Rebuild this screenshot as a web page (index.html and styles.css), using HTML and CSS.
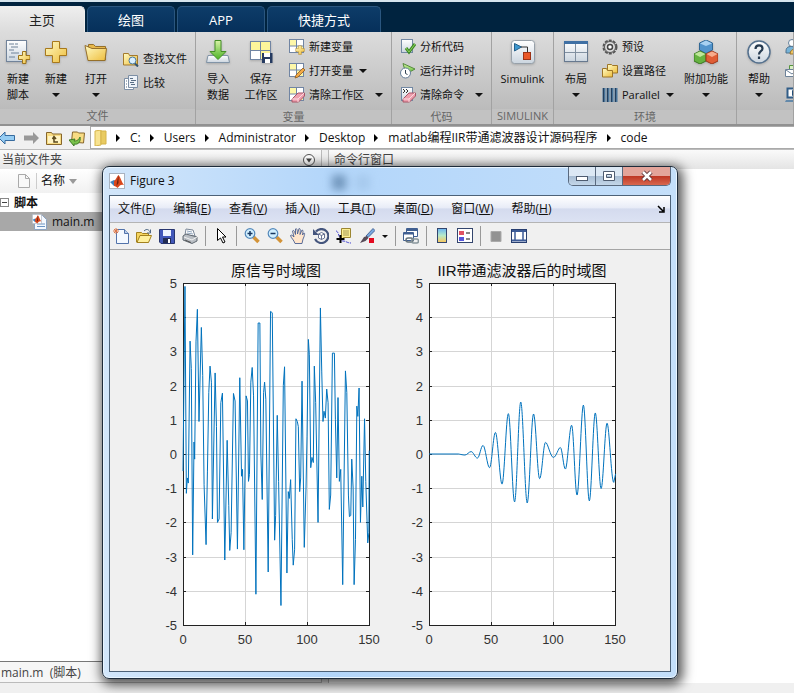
FILE: index.html
```html
<!DOCTYPE html>
<html lang="zh-CN">
  <head>
    <meta charset="UTF-8" />
    <title>MATLAB</title>
    <link rel="stylesheet" href="styles.css">
  </head>
  <body>
    <!-- shared icons -->
    <svg class="defs" width="0" height="0" aria-hidden="true">
      <defs>
        <linearGradient id="gold" x1="0" y1="0" x2="1" y2="1"><stop offset="0" stop-color="#fffbc4" /><stop offset="1" stop-color="#eebd3c" /></linearGradient>
        <linearGradient id="green" x1="0" y1="0" x2="0" y2="1"><stop offset="0" stop-color="#d9f3a8" /><stop offset="1" stop-color="#4bb324" /></linearGradient>
        <linearGradient id="silver" x1="0" y1="0" x2="0" y2="1"><stop offset="0" stop-color="#fff" /><stop offset="1" stop-color="#cbd5df" /></linearGradient>
        <linearGradient id="rainbow" x1="0" y1="0" x2="0" y2="1"><stop offset="0" stop-color="#6ab4f4" /><stop offset=".5" stop-color="#b7eac9" /><stop offset="1" stop-color="#fbc65a" /></linearGradient>
      </defs>
      <symbol id="plus" viewBox="0 0 24 24"><path d="M8.500 1.500h7v7h7v7h-7v7h-7v-7h-7v-7h7z" fill="url(#gold)" stroke="#a8791c" /></symbol>
      <symbol id="folder" viewBox="0 0 24 24"><path d="M4.500 20V4.500h5l2 2h10V20z" fill="#e7b84b" stroke="#96702a" /><path d="M1 5.500l7 3h14.500l-1.500 12H4z" fill="url(#gold)" stroke="#96702a" /></symbol>
      <symbol id="grid" viewBox="0 0 16 16"><rect x=".5" y=".5" width="14" height="13" fill="#fff" stroke="#7185a3" /><path d="M1 1h6v6H1zM8 7h6v6H8z" fill="#fdf7a8" /><path d="M7.500 1v12M1 7h13" stroke="#7185a3" /></symbol>
      <symbol id="page" viewBox="0 0 16 16"><rect x="1.500" y=".5" width="11" height="13" fill="url(#silver)" stroke="#7288a3" /></symbol>
      <symbol id="eraser" viewBox="0 0 16 16"><path d="M3 12l6-6h6.500v3l-6 6H3z" fill="#ee9fae" stroke="#a75466" /><path d="M3 12h6l6-6M9 12v3" fill="none" stroke="#fbd9df" /></symbol>
      <symbol id="matlab" viewBox="0 0 16 16"><rect x=".5" y=".5" width="15" height="15" fill="#fff" stroke="#a9b3c0" /><path d="M1 9l4-2 3 2-3 4z" fill="#3f82bd" /><path d="M5 8c2-1 3-5 4.500-6 2 2 3 7 5.500 10-3-1-4 0-6.500 3-1-1-2-2-3.500-2z" fill="#d9471c" /><path d="M8 9l1.500-7v8l-2 3z" fill="#71200e" /></symbol>
      <symbol id="lens" viewBox="0 0 16 16"><path d="M9.500 9l5 5" stroke="#d39337" stroke-width="3.500" /><circle cx="6" cy="5.500" r="4.800" fill="#d1efff" stroke="#5488ba" stroke-width="1.200" /><path d="M3.500 5.500h5" stroke="#17355f" stroke-width="1.500" /></symbol>
    </svg>

    <div class="app">
      <!-- tabs -->
      <nav class="tabs">
        <button class="tab on">主页</button>
        <button class="tab">绘图</button>
        <button class="tab">APP</button>
        <button class="tab wide">快捷方式</button>
      </nav>

      <!-- ribbon -->
      <div class="ribbon">
        <section class="group">
          <div class="tools file">
            <button class="big">
              <svg viewBox="0 0 24 24"><rect x=".5" y=".5" width="20" height="21" fill="url(#silver)" stroke="#71839a" /><path d="M3 4h5M9 4h3M5 7h7M3 10h5M5 13h8M3 17h6" stroke="#6f8299" /><path d="M16.500 11.500h3.500v4h4v4h-4v4h-3.500v-4h-4v-4h4z" fill="url(#gold)" stroke="#9d741d" /></svg>
              <span>新建<br>脚本</span>
            </button>
            <button class="big"><svg><use href="#plus" /></svg><span>新建</span><i class="arrow"></i></button>
            <button class="big"><svg><use href="#folder" /></svg><span>打开</span><i class="arrow"></i></button>
            <div class="rows">
              <button class="row"><svg viewBox="0 0 16 16"><path d="M.5 14V2.500h5l1 2h8V14z" fill="url(#gold)" stroke="#a47a2c" /><path d="M11.500 12l3.500 3.500" stroke="#34556f" stroke-width="2" /><circle cx="9.500" cy="9.500" r="3.500" fill="#d9efff" stroke="#48779c" /></svg>查找文件</button>
              <button class="row"><svg viewBox="0 0 16 16"><path d="M1.500 3.500h9v11h-9z" fill="#fff" stroke="#7d8fa5" /><path d="M5.500.5h9v12h-9z" fill="#edf2f8" stroke="#7d8fa5" /><path d="M7 3.500h3M8 5.500h5M7 7.500h4M8 9.500h4M3 6h1M3 9h1M3 12h1" stroke="#5a6f86" /></svg>比较</button>
            </div>
          </div>
          <h2>文件</h2>
        </section>

        <section class="group">
          <div class="tools vars">
            <button class="big">
              <svg viewBox="0 0 24 24"><path d="M2 15.500h20l1.500 7H.5z" fill="url(#silver)" stroke="#8194a7" /><path d="M9 .5h6v11h5l-8 8-8-8h5z" fill="url(#green)" stroke="#438f25" /></svg>
              <span>导入<br>数据</span>
            </button>
            <button class="big">
              <svg viewBox="0 0 24 24"><rect x="1.500" y="1.500" width="20" height="18" fill="#fff" stroke="#7185a3" /><path d="M2 2h9v8H2zM12 2h9v8h-9zM12 11h9v8h-9z" fill="#fdf59a" /><path d="M11.500 2v17M2 10.500h19" stroke="#7185a3" /><path d="M13 13h10.500v10H13z" fill="#263b61" /><path d="M15 13h6v4h-6zM16 19h5v4h-5z" fill="#fff" /></svg>
              <span>保存<br>工作区</span>
            </button>
            <div class="rows">
              <button class="row"><svg viewBox="0 0 16 16"><use href="#grid" /><use href="#plus" x="6" y="6" width="10" height="10" /></svg>新建变量</button>
              <button class="row"><svg viewBox="0 0 16 16"><use href="#grid" /><path d="M7 12l7-7 2 2-7 7-3 1z" fill="#f3a945" stroke="#8d5a20" stroke-width=".8" /></svg>打开变量<i class="arrow"></i></button>
              <button class="row"><svg viewBox="0 0 16 16"><use href="#grid" /><use href="#eraser" /></svg>清除工作区<i class="arrow far"></i></button>
            </div>
          </div>
          <h2>变量</h2>
        </section>

        <section class="group">
          <div class="tools code">
            <div class="rows">
              <button class="row"><svg viewBox="0 0 16 16"><use href="#page" /><path d="M6 9l3 4 6-8" fill="none" stroke="#3c8a26" stroke-width="3" /><path d="M6 9l3 4 6-8" fill="none" stroke="#90d15c" /></svg>分析代码</button>
              <button class="row"><svg viewBox="0 0 16 16"><path d="M3 .5l12 5.500-9 5z" fill="url(#green)" stroke="#548b3b" /><circle cx="5.500" cy="10" r="5" fill="#fff" stroke="#67809b" /><path d="M5.500 7v3.500l2 1" fill="none" stroke="#345" /></svg>运行并计时</button>
              <button class="row"><svg viewBox="0 0 16 16"><use href="#page" /><path d="M3 2l2 2-2 2M6 2l2 2-2 2" fill="none" stroke="#333" /><use href="#eraser" /></svg>清除命令<i class="arrow far"></i></button>
            </div>
          </div>
          <h2>代码</h2>
        </section>

        <section class="group">
          <div class="tools sim">
            <button class="big">
              <svg viewBox="0 0 24 24"><rect x=".5" y=".5" width="23" height="23" rx="3" fill="url(#silver)" stroke="#97a0a9" /><path d="M3.500 3.500l7 3.500-7 4z" fill="#3c97cf" stroke="#23608b" /><path d="M10 7h6.500v5" fill="none" stroke="#333" /><rect x="12.500" y="12.500" width="7" height="7" fill="#e95727" stroke="#9c3216" /></svg>
              <span>Simulink</span>
            </button>
          </div>
          <h2>SIMULINK</h2>
        </section>

        <section class="group">
          <div class="tools env">
            <button class="big">
              <svg viewBox="0 0 24 24"><rect x=".5" y="1.500" width="23" height="20" fill="url(#silver)" stroke="#67798f" /><path d="M0 1h24v3H0z" fill="#3f70a4" /><path d="M11.500 4v17M1 12.500h22" stroke="#8190a0" /></svg>
              <span>布局</span><i class="arrow"></i>
            </button>
            <div class="rows">
              <button class="row"><svg viewBox="0 0 16 16"><circle cx="8" cy="8" r="6.500" fill="none" stroke="#555" stroke-width="2" stroke-dasharray="3 1.080" /><circle cx="8" cy="8" r="5.500" fill="#ddd" stroke="#555" /><circle cx="8" cy="8" r="2.500" fill="#fff" stroke="#444" stroke-width="1.500" /></svg>预设</button>
              <button class="row"><svg viewBox="0 0 16 16"><path d="M5.500 8V1.500h4l1 1h5V10h-6z" fill="url(#gold)" stroke="#9d7527" /><path d="M.5 14V5.500h4l1 2h5V14z" fill="url(#gold)" stroke="#9d7527" /></svg>设置路径</button>
              <button class="row"><svg viewBox="0 0 16 16"><path d="M.5 1h3v14h-3zM4.500 1h3v14h-3zM8.500 1h3v14h-3zM12.500 1h3v14h-3z" fill="#477399" /><path d="M1.500 1v14M5.500 1v14M9.500 1v14M13.500 1v14" stroke="#243f5d" /></svg>Parallel<i class="arrow"></i></button>
            </div>
            <button class="big">
              <svg viewBox="0 0 24 24"><path d="M12 0l6.500 3v7L12 13.500 5.500 10V3z" fill="#5294cc" stroke="#316895" /><path d="M12 .5l6 3-6 2.500-6-2.500z" fill="#a8d1f2" /><path d="M6 11l6 3v7l-6 3-6-3v-7z" fill="#66b341" stroke="#397820" /><path d="M6 11.500l5.500 2.500L6 17 .5 14z" fill="#bfe69a" /><path d="M18 11l6 3v7l-6 3-6-3v-7z" fill="#df5d35" stroke="#9c3518" /><path d="M18 11.500l5.500 2.500-5.500 3-5.500-3z" fill="#f7ac8c" /></svg>
              <span>附加功能</span><i class="arrow"></i>
            </button>
          </div>
          <h2>环境</h2>
        </section>

        <section class="group">
          <div class="tools help">
            <button class="big">
              <svg viewBox="0 0 24 24"><circle cx="12" cy="12" r="11" fill="url(#silver)" stroke="#55718e" stroke-width="1.500" /><path d="M8.500 9c0-5 7-4.500 7-.5 0 3-3.500 2.500-3.500 6M12 16.500v2.500" fill="none" stroke="#263b51" stroke-width="2.200" /></svg>
              <span>帮助</span><i class="arrow"></i>
            </button>
            <div class="rows">
              <button class="row" aria-label="社区"><svg viewBox="0 0 16 16"><circle cx="7" cy="4" r="3.500" fill="#fff" stroke="#66819b" /><path d="M1 12c0-5 5-5 8-4v6H1z" fill="#76b3d8" stroke="#51728d" /><path d="M5 15c0-6 9-7 11-2v2z" fill="#efc665" stroke="#9c7428" /></svg></button>
              <button class="row" aria-label="请求支持"><svg viewBox="0 0 16 16"><path d="M4.500 2.500h11v7h-11z" fill="#d9efc3" stroke="#56953e" /><path d="M.5 6.500h12v7H.5z" fill="#fff" stroke="#6d8299" /><path d="M1 7l6 4 5-4" fill="none" stroke="#6d8299" /></svg></button>
              <button class="row" aria-label="了解"><svg viewBox="0 0 16 16"><path d="M2.500 1.500h13v9h-13z" fill="#fff" stroke="#315d87" stroke-width="2" /><path d="M7 3l5 3-5 3z" fill="#254f78" /><path d="M1 13h15v2H0z" fill="#6389aa" /></svg></button>
            </div>
          </div>
          <h2></h2>
        </section>
      </div>

      <!-- address bar -->
      <div class="address">
        <div class="history">
          <button aria-label="后退"><svg viewBox="0 0 16 16"><path d="M-1 8l6-6v3.500h9.500v5H5V14z" fill="#96cdf3" stroke="#376b9e" /></svg></button>
          <button aria-label="前进"><svg viewBox="0 0 16 16"><path d="M16 8l-6-6v3.500H1v5h9V14z" fill="#999" /></svg></button>
          <button aria-label="向上一级"><svg viewBox="0 0 16 16"><path d="M.5 14.500v-12h5l1 1.500h9v10.500z" fill="#f8dc83" stroke="#87662b" /><path d="M2 6h12v7H2z" fill="#fff4c5" /><path d="M6.500 9L8 6.500 10 9M8 7v5h4" fill="none" stroke="#5b481c" stroke-width="1.500" /></svg></button>
          <button aria-label="浏览"><svg viewBox="0 0 16 16"><path d="M2.500 12l1-10h5l1 1h6l-1 10z" fill="#f8dc83" stroke="#87662b" /><path d="M0 10l6-1-1 2c4 0 5-2 6-4 1 5-2 8-6 7v2z" fill="#79c14c" stroke="#3d7b26" /></svg></button>
        </div>
        <nav class="crumbs">
          <svg viewBox="0 0 16 16"><path d="M2 1l6-1v15l-6 1z" fill="#f8e390" stroke="#d6b54b" /><path d="M8 1h5v13H8z" fill="#e9cb62" stroke="#d6b54b" /></svg>
          <i></i><a href="#">C:</a>
          <i></i><a href="#">Users</a>
          <i></i><a href="#">Administrator</a>
          <i></i><a href="#">Desktop</a>
          <i></i><a href="#">matlab编程IIR带通滤波器设计源码程序</a>
          <i></i><a href="#">code</a>
        </nav>
      </div>

      <!-- panels -->
      <main class="panels">
        <section class="panel folder">
          <h3>当前文件夹
            <button aria-label="面板操作"><svg viewBox="0 0 12 12"><circle cx="6" cy="6" r="5.500" fill="#fff" stroke="#555" /><path d="M3 4.500h6L6 8.500z" fill="#444" /></svg></button>
          </h3>
          <div class="head">
            <svg viewBox="0 0 12 14"><path d="M.5.5h7l4 4v9H.5z" fill="#f8f8f8" stroke="#aaa" /><path d="M7.500.5v4h4" fill="none" stroke="#aaa" /></svg>
            <span>名称</span><i></i>
          </div>
          <ul class="files">
            <li class="kind"><svg viewBox="0 0 9 9"><rect x=".5" y=".5" width="8" height="8" fill="#fff" stroke="#888" /><path d="M2 4.500h5" stroke="#444" /></svg>脚本</li>
            <li class="item"><svg viewBox="0 0 16 16"><path d="M2.500 1.500h8l4 4v10h-12z" fill="#f5f9ff" stroke="#8aa3c3" /><path d="M5 10h8M5 12.500h8" stroke="#6b94c4" /><use href="#matlab" x="0" y="0" width="10" height="10" /></svg>main.m</li>
          </ul>
          <div class="detail">main.m&nbsp; (脚本)</div>
        </section>
        <section class="panel command">
          <h3>命令行窗口</h3>
        </section>
      </main>
    </div>

    <!-- figure window -->
    <div class="window">
      <header class="caption">
        <svg><use href="#matlab" /></svg>
        <h1>Figure 3</h1>
        <div class="winbtns">
          <button aria-label="最小化"><svg viewBox="0 0 14 12"><rect x="1.500" y="6.500" width="11" height="4" fill="#fff" stroke="#4f5c70" /></svg></button>
          <button aria-label="最大化"><svg viewBox="0 0 14 12"><path d="M1.500 1.500h11v9h-11zM4.500 4.500h5v3h-5z" fill="#fff" fill-rule="evenodd" stroke="#4f5c70" /></svg></button>
          <button class="close" aria-label="关闭"><svg viewBox="0 0 14 12"><path d="M3 2l8 8M11 2l-8 8" stroke="#5b3539" stroke-width="4.500" /><path d="M3 2l8 8M11 2l-8 8" stroke="#fff" stroke-width="2.500" /></svg></button>
        </div>
      </header>
      <div class="client">
        <nav class="menu">
          <button>文件(<u>F</u>)</button>
          <button>编辑(<u>E</u>)</button>
          <button>查看(<u>V</u>)</button>
          <button>插入(<u>I</u>)</button>
          <button>工具(<u>T</u>)</button>
          <button>桌面(<u>D</u>)</button>
          <button>窗口(<u>W</u>)</button>
          <button>帮助(<u>H</u>)</button>
          <button class="dock" aria-label="停靠"><svg viewBox="0 0 8 8"><path d="M1 1l5 5M7 2v5H2" fill="none" stroke="#000" stroke-width="1.500" /></svg></button>
        </nav>
        <div class="toolbar">
          <button aria-label="新建图窗"><svg viewBox="0 0 16 16"><path d="M3.500 1.500h8l4 4v10h-12z" fill="#f4f9ff" stroke="#5273aa" /><path d="M11.500 1.500v4h4" fill="#b8cdea" stroke="#5273aa" /><path d="M3 0v6M0 3h6M1 1l4 4M5 1L1 5" stroke="#df7849" /></svg></button>
          <button aria-label="打开"><svg viewBox="0 0 16 16"><path d="M.5 14V4.500h5l1 1h6V14z" fill="#f5d45f" stroke="#a3811e" /><path d="M1 14.500l3-7h11.500l-3 7z" fill="#fff09c" stroke="#a3811e" /><path d="M8 3c3-3 5-1 6 1M14.500 1.500V5H11" fill="none" stroke="#536b86" /></svg></button>
          <button aria-label="保存"><svg viewBox="0 0 16 16"><path d="M.5 1.500h15v14H2L.5 14z" fill="#4258ba" stroke="#28366f" /><path d="M4 2h8v6H4z" fill="#edf3ff" /><path d="M4 10h8v5H4z" fill="#222c53" /><path d="M9 11h2v4H9z" fill="#fff" /></svg></button>
          <button aria-label="打印"><svg viewBox="0 0 16 16"><path d="M3 7l1-6 7 1 2 6z" fill="#fff" stroke="#7b8798" /><path d="M5 3l5 1M5 5l6 1" stroke="#8fa4bc" /><path d="M1 8l3-2 11 3v4l-5 2.500L1 12z" fill="#b9bec4" stroke="#626a72" /><path d="M2 9l8 3 5-3" fill="none" stroke="#f1f1f1" /><path d="M3 12l6 2.500" stroke="#555" /></svg></button>
          <span class="sep"></span>
          <button aria-label="编辑绘图"><svg viewBox="0 0 16 16"><path d="M4.500.5v12l3-2.500 2.500 5 2-1-2.500-5h3.500z" fill="#fff" stroke="#000" /></svg></button>
          <span class="sep"></span>
          <button aria-label="放大"><svg viewBox="0 0 16 16"><use href="#lens" /><path d="M6 3v5" stroke="#17355f" stroke-width="1.500" /></svg></button>
          <button aria-label="缩小"><svg><use href="#lens" /></svg></button>
          <button aria-label="平移"><svg viewBox="0 0 16 16"><path d="M5 15.500C4 12 1 10 .5 7.500c1-1 2 0 3.500 1.500L2.500 3c1-1.500 2 0 3 3.500L5.500 1c1-1 2 0 2 5L9 .5c1.500 0 1.500 1 1 6l2-4.500c1.500 0 1 2 .5 5l1.500-2c1.500 0 0 4-1 6l-1 4.500z" fill="#ffe5cc" stroke="#495f91" stroke-width=".9" /></svg></button>
          <button aria-label="旋转"><svg viewBox="0 0 16 16"><path d="M3 3.500A7 7 0 1 1 2 11" fill="none" stroke="#44557d" stroke-width="2.200" /><path d="M0 1v6h6z" fill="#44557d" /><path d="M8.500 4.500l3 1.500v4l-3 1.500-3-1.500V6zM5.500 6l3 1.500 3-1.500M8.500 7.500v4" fill="#fff" stroke="#5a6788" stroke-width=".9" /></svg></button>
          <button aria-label="数据游标"><svg viewBox="0 0 16 16"><path d="M0 3c3 0 3 10 7 10 3 0 4 2 8 2" fill="none" stroke="#4545d1" stroke-dasharray="3 1" /><path d="M5.500.5h9v9h-7l-2 2z" fill="#fcef91" stroke="#9c8632" /><path d="M7 3h6M7 5h6M7 7h6" stroke="#a5985b" /><path d="M4.500 7v8M.5 11h8" stroke="#000" stroke-width="2" /></svg></button>
          <button aria-label="刷亮"><svg viewBox="0 0 16 16"><path d="M7 8L14 .5l2 2-7 7z" fill="#79a9df" stroke="#304f85" stroke-width=".8" /><path d="M1 15l4-6 3-1 1.500 2-3 3z" fill="#574b58" /><path d="M10 10h5v5h-5z" fill="#e30b20" /></svg></button>
          <i class="arrow"></i>
          <span class="sep"></span>
          <button aria-label="链接"><svg viewBox="0 0 16 16"><path d="M3.500.5h11v8h-11z" fill="#fff" stroke="#405f91" /><path d="M3 1h12v2H3z" fill="#405f91" /><path d="M.5 4.500h10v8H.5z" fill="#fff" stroke="#405f91" /><path d="M1 5.500h9" stroke="#405f91" stroke-width="2" /><rect x="3" y="10" width="7" height="4" rx="2" fill="none" stroke="#64737b" stroke-width="1.500" /><rect x="8.500" y="11" width="7" height="4" rx="2" fill="none" stroke="#89969c" stroke-width="1.500" /></svg></button>
          <span class="sep"></span>
          <button aria-label="颜色栏"><svg viewBox="0 0 16 16"><rect x="3.500" y=".5" width="9" height="14" fill="url(#rainbow)" stroke="#33456d" /></svg></button>
          <button aria-label="图例"><svg viewBox="0 0 16 16"><rect x=".5" y=".5" width="15" height="14" fill="#fff" stroke="#33456d" /><path d="M2 3h5v4H2z" fill="#e05363" /><path d="M2 9h5v4H2z" fill="#5656da" /><path d="M9 5h4M9 11h4" stroke="#111" /></svg></button>
          <span class="sep"></span>
          <button aria-label="隐藏绘图工具"><svg viewBox="0 0 16 16"><path d="M3 3.500h10v10H3z" fill="#929292" stroke="#aaa" /></svg></button>
          <button aria-label="显示绘图工具"><svg viewBox="0 0 16 16"><rect x=".5" y="1.500" width="15" height="13" fill="#fff" stroke="#283f70" /><path d="M1 3h14M1 12.500h14" stroke="#3d5b97" stroke-width="2" /><path d="M4 4v9M12 4v9" stroke="#3d5b97" stroke-width="1.500" /></svg></button>
        </div>

        <div class="plots">
          <svg class="plot" viewBox="0 0 246 400">
            <text class="title" x="126" y="25">原信号时域图</text>
            <rect class="area" x="33" y="32" width="186" height="342" />
            <path class="grid" d="M95 32v342M157 32v342M33 66h186M33 100h186M33 135h186M33 169h186M33 203h186M33 237h186M33 271h186M33 306h186M33 340h186" />
            <path class="ticks" d="M95 32v3M157 32v3M95 374v-3M157 374v-3M33 66h3M33 100h3M33 135h3M33 169h3M33 203h3M33 237h3M33 271h3M33 306h3M33 340h3M219 66h-3M219 100h-3M219 135h-3M219 169h-3M219 203h-3M219 237h-3M219 271h-3M219 306h-3M219 340h-3" />
            <rect class="box" x="33" y="32" width="186" height="342" />
            <polyline class="line" transform="translate(33 203) scale(1.24 -34.2)" points="0,-.5 1.6,4.9 2.7,-1.15 3.5,-.7 4.3,-.85 5.7,3.3 6.7,2.5 7.8,-2.95 8.9,.35 9.4,-.15 10.5,3.3 11.6,4.23 12.9,.95 14.8,3.7 15.9,2.3 17,-.9 18.6,-2.65 19.7,-.5 20.8,1.8 21.8,2.57 22.9,2.1 23.7,-1.9 25.9,2.37 27,.8 27.8,-2 29.1,-1.9 30.5,1.5 31.8,1.78 33.7,-3.1 35.6,.4 36.9,-1.5 37.7,-2.82 38.8,-2.3 40.7,1.77 42,1.55 43.9,-2.78 45.8,2.23 47.2,-.65 48,-.45 49.1,-2.8 50.9,1.7 52,1.55 52.8,-.8 53.6,-.6 54.7,2.1 55.8,2.53 56.9,1.7 58.8,-4.1 60.6,3.83 62,3.83 62.8,0 63.9,-1.33 65,1.8 65.8,2.1 66.8,1.6 68.7,-3.45 70.6,4.17 72,4.13 73.9,-2.52 74.7,-1.8 76,1.13 77.1,-.8 79,-4.43 80.9,2 81.9,2.55 83.8,-3.48 84.9,-1.1 85.7,-1.3 86.8,-.75 88.1,-2.5 88.9,-3.25 90,-2.8 91.1,1.03 92.2,.95 93,.8 94.1,-1.1 94.9,-.7 96,2.13 97.8,-2.73 99.2,-1 100,.5 101.1,3.35 101.9,2.9 103,-.4 104,-.1 105.1,-.25 105.9,2.57 107,1.5 108.9,-2 110.8,4.27 111.9,2.4 112.9,.95 113.7,1.25 114.8,1.05 115.9,1.9 117,1.5 118,-1.62 119.1,-1.2 120.5,2.95 122.1,2.95 122.9,1 124,-.7 125,1.65 126.1,-.8 127.2,-.45 128.8,-3.82 131,2.43 132.1,1.8 133.4,-1.2 134.2,-1.83 135.3,-1.8 136.1,-.15 137.2,-1 138,-3.82 139.1,-2.5 140.2,1.4 141,1.1 142,1.93 143.1,-2 144.2,-.65 145,-1.55 146.4,1.03 147.4,-.8 149,-2.6 149.9,-2.3 150.2,.1" />
            <g class="ylabels"><text x="27" y="37">5</text><text x="27" y="71">4</text><text x="27" y="105">3</text><text x="27" y="140">2</text><text x="27" y="174">1</text><text x="27" y="208">0</text><text x="27" y="242">-1</text><text x="27" y="276">-2</text><text x="27" y="311">-3</text><text x="27" y="345">-4</text><text x="27" y="379">-5</text></g>
            <g class="xlabels"><text x="33" y="393">0</text><text x="95" y="393">50</text><text x="157" y="393">100</text><text x="219" y="393">150</text></g>
          </svg>
          <svg class="plot" viewBox="0 0 246 400">
            <text class="title" x="126" y="25">IIR带通滤波器后的时域图</text>
            <rect class="area" x="33" y="32" width="186" height="342" />
            <path class="grid" d="M95 32v342M157 32v342M33 66h186M33 100h186M33 135h186M33 169h186M33 203h186M33 237h186M33 271h186M33 306h186M33 340h186" />
            <path class="ticks" d="M95 32v3M157 32v3M95 374v-3M157 374v-3M33 66h3M33 100h3M33 135h3M33 169h3M33 203h3M33 237h3M33 271h3M33 306h3M33 340h3M219 66h-3M219 100h-3M219 135h-3M219 169h-3M219 203h-3M219 237h-3M219 271h-3M219 306h-3M219 340h-3" />
            <rect class="box" x="33" y="32" width="186" height="342" />
            <path class="line" transform="translate(33 203) scale(1.24 -34.2)" d="M0 0H24S27.200-.03 29-.03 32.200.07 34 .07 37.200-.12 39-.12 41.800.25 43.600.25 47-.4 48.800-.4 51.800.63 53.600.63 57.100-.88 58.900-.88 62.200 1.180 64 1.180 67.200-1.400 69-1.400 72.200 1.520 74 1.520 77.400-1.430 79.200-1.430 82.500 1.170 84.300 1.170 87.400-.72 89.200-.72 92.200.34 94 .34 98-.1 100.300-.1 104.300.19 105.900.19 108.400-.44 110-.44 113.300.84 115 .84 117.700-1.200 119.400-1.200 122.800 1.430 124.500 1.430 127.600-1.370 129.300-1.370 132.400 1.200 134.100 1.200 137.100-1.010 138.800-1.010 141.900.9 143.600.9 147-.83 149-.83L150.500-.58" />
            <g class="ylabels"><text x="27" y="37">5</text><text x="27" y="71">4</text><text x="27" y="105">3</text><text x="27" y="140">2</text><text x="27" y="174">1</text><text x="27" y="208">0</text><text x="27" y="242">-1</text><text x="27" y="276">-2</text><text x="27" y="311">-3</text><text x="27" y="345">-4</text><text x="27" y="379">-5</text></g>
            <g class="xlabels"><text x="33" y="393">0</text><text x="95" y="393">50</text><text x="157" y="393">100</text><text x="219" y="393">150</text></g>
          </svg>
        </div>
      </div>
    </div>
  </body>
</html>
```
FILE: styles.css
```css
* {
  box-sizing: border-box;
}
html,
body,
ul,
h1,
h2,
h3 {
  margin: 0;
  padding: 0;
  font-weight: normal;
}
body {
  position: relative;
  height: 100vh;
  overflow: hidden;
  font: 12px/16px "Open Sans", "Noto Sans CJK SC", sans-serif;
  color: #111;
}
ul {
  list-style: none;
}
button {
  padding: 0;
  border: 0;
  background: none;
  font: inherit;
  color: inherit;
}
svg {
  flex: none;
  width: 16px;
  height: 16px;
}
.defs {
  position: absolute;
  width: 0;
  height: 0;
}
.app {
  display: flex;
  flex-direction: column;
  height: 100%;
}

/* tabs */
.tabs {
  display: flex;
  gap: 2px;
  height: 32px;
  padding-top: 4px;
  border-top: 2px solid #d5e4ed;
  background: #00233f;
}
.tab {
  width: 88px;
  border: 1px solid #2a567f;
  border-bottom: 0;
  border-radius: 5px 5px 0 0;
  background: linear-gradient(#0d3c69, #06305a);
  color: #fff;
  font-size: 13px;
}
.tab.wide {
  width: 114px;
}
.tab.on {
  width: 85px;
  border-color: #eee;
  border-left: 0;
  border-top-left-radius: 0;
  background: linear-gradient(#eee, #dcdcdc);
  color: #222;
}

/* ribbon */
.ribbon {
  display: grid;
  grid-template-columns: 196px 196px 100px 62px 183px 1fr;
  height: 94px;
  border-bottom: 2px solid #919191;
  background: linear-gradient(#dcdcdc, #b5b5b5);
  font-size: 11px;
}
.group {
  display: flex;
  flex-direction: column;
  min-width: 0;
  overflow: hidden;
  border-right: 1px solid #a2a2a2;
}
.group h2 {
  height: 15px;
  background: #c2c2c2;
  color: #666;
  font-size: 11px;
  line-height: 14px;
  text-align: center;
}
.tools {
  display: grid;
  height: 78px;
  padding: 3px 0;
}
.file {
  grid-template-columns: 36px 40px 40px 1fr;
}
.vars {
  grid-template-columns: 44px 42px 1fr;
}
.env {
  grid-template-columns: 44px 1fr 60px;
}
.help {
  grid-template-columns: 44px 1fr;
}
.big {
  display: flex;
  flex-direction: column;
  align-items: center;
  padding-top: 5px;
  line-height: 16px;
  white-space: nowrap;
}
.big svg {
  width: 24px;
  height: 24px;
  margin-bottom: 7px;
  filter: drop-shadow(0 1px 1px #8888);
}
.arrow {
  flex: none;
  width: 8px;
  border: 4px solid transparent;
  border-top-color: #111;
  border-bottom: 0;
}
.big .arrow {
  margin-top: 6px;
}
.rows {
  display: flex;
  flex-direction: column;
  justify-content: center;
  padding-left: 7px;
}
.code .rows {
  padding-left: 8px;
}
.env .rows,
.help .rows {
  padding-left: 4px;
}
.row {
  display: flex;
  align-items: center;
  gap: 4px;
  height: 24px;
  white-space: nowrap;
}
.row .arrow {
  margin-left: 2px;
}
.row .arrow.far {
  margin-left: 7px;
}

/* address bar */
.address {
  display: flex;
  height: 24px;
  border-bottom: 1px solid #bbb;
  background: #f0f0f0;
}
.history {
  display: flex;
  align-items: center;
  gap: 7px;
  width: 90px;
}
.history button,
.toolbar button {
  display: flex;
}
.crumbs {
  display: flex;
  flex: 1;
  align-items: center;
  border: 1px solid #aaa;
  border-right: 0;
  background: #fff;
  font-size: 12px;
}
.crumbs svg {
  margin: 0 2px;
}
.crumbs a {
  color: #111;
  text-decoration: none;
}
.crumbs i {
  margin: 0 10px 0 9px;
  border: 4px solid transparent;
  border-left-color: #000;
  border-right: 0;
}
.crumbs svg + i {
  margin-left: 5px;
}

/* panels */
.panels {
  display: flex;
  flex: 1;
  gap: 6px;
  padding-bottom: 10px;
  background: #f0f0f0;
}
.panel {
  display: flex;
  flex-direction: column;
  border: 1px solid #bbb;
  border-width: 0 1px 1px 0;
  background: #fff;
}
.panel h3 {
  display: flex;
  align-items: center;
  justify-content: space-between;
  height: 19px;
  padding: 0 6px 0 2px;
  background: linear-gradient(#fafafa, #e4e4e4);
  color: #444;
  font-size: 12px;
}
.panel h3 button,
.panel h3 svg {
  display: block;
  width: 12px;
  height: 12px;
}
.folder {
  width: 322px;
}
.command {
  flex: 1;
  border-width: 0 0 0 1px;
}
.command h3 {
  padding-left: 5px;
}
.head {
  display: flex;
  align-items: center;
  height: 24px;
  padding-left: 18px;
  background: linear-gradient(#fff, #f1f1f1);
}
.head svg {
  width: 12px;
  height: 14px;
}
.head span {
  margin-left: 6px;
  padding-left: 4px;
  border-left: 1px solid #ccc;
}
.head i {
  margin-left: 4px;
  border: 4px solid transparent;
  border-top: 5px solid #999;
  border-bottom: 0;
}
.files {
  flex: 1;
}
.files li {
  display: flex;
  align-items: center;
  height: 19px;
}
.files .kind {
  gap: 5px;
  font-weight: bold;
}
.kind svg {
  width: 9px;
  height: 9px;
}
.files .item {
  gap: 4px;
  padding-left: 32px;
  background: #a8a8a8;
}
.detail {
  height: 21px;
  padding-left: 1px;
  border-top: 1px solid #777;
  background: #f6f6f6;
  color: #444;
  line-height: 22px;
}

/* figure window, floats over the desktop */
.window {
  position: absolute;
  top: 166px;
  left: 102px;
  display: flex;
  flex-direction: column;
  width: 576px;
  height: 513px;
  padding: 0 6px 6px;
  border: 1px solid #1d2b3a;
  border-radius: 7px;
  background: linear-gradient(90deg, #d2e6fa, #b3d6fa 40%, #c4dffa);
  box-shadow: inset 0 0 0 1px #e9f5ff, 2px 3px 12px 3px #000a;
}
.caption {
  display: flex;
  align-items: flex-start;
  height: 28px;
}
.caption svg {
  margin-top: 6px;
}
.caption h1 {
  flex: 1;
  padding: 6px 0 0 5px;
  font-size: 12px;
}
/* blurred text seen through the glass */
.caption h1::after {
  content: "";
  float: right;
  width: 38px;
  height: 15px;
  margin: 2px 198px 0 0;
  background: linear-gradient(90deg, #456b93 14px, transparent 14px 24px, #9dc0e4 24px);
  filter: blur(4px);
  opacity: 0.6;
}
.winbtns {
  display: flex;
  border: 1px solid #59697e;
  border-top: 0;
  border-radius: 0 0 5px 5px;
  overflow: hidden;
}
.winbtns button {
  display: flex;
  align-items: center;
  justify-content: center;
  width: 27px;
  height: 18px;
  border-right: 1px solid #59697e;
  background: linear-gradient(#dce8f4 48%, #a8bdd3 50%, #c3d6e9);
}
.winbtns .close {
  width: 47px;
  border: 0;
  background: linear-gradient(#e3a49a 48%, #bd3523 50%, #d9674e);
}
.winbtns svg {
  width: 14px;
  height: 12px;
  margin: 0;
}
.client {
  display: flex;
  flex: 1;
  flex-direction: column;
  border: 1px solid #4d6278;
  background: #f0f0f0;
}
.menu {
  display: flex;
  align-items: center;
  gap: 18px;
  height: 27px;
  padding: 0 5px 0 8px;
  border-bottom: 1px solid #b4b4b4;
  background: linear-gradient(#fff, #e8ecf7 45%, #d4dbee 50%, #dce2f3);
}
.dock {
  margin-left: auto;
}
.dock svg {
  display: block;
  width: 8px;
  height: 8px;
}
.toolbar {
  display: flex;
  align-items: center;
  gap: 7px;
  height: 27px;
  padding-left: 3px;
  border-bottom: 1px solid #a5a5a5;
}
.sep {
  width: 1px;
  height: 20px;
  background: #999;
}
.toolbar .arrow {
  width: 6px;
  border-width: 3px 3px 0;
}
.plots {
  display: flex;
  padding: 1px 28px 0 40px;
}

/* charts */
.plot {
  flex: 1;
  width: auto;
  min-width: 0;
  height: auto;
  font-family: "Liberation Sans", "Noto Sans CJK SC", sans-serif;
  font-size: 13px;
  fill: #333;
}
.title {
  font-size: 15px;
  text-anchor: middle;
  fill: #111;
}
.area {
  fill: #fff;
}
.grid,
.ticks,
.box {
  fill: none;
  stroke: #d5d5d5;
  shape-rendering: crispEdges;
}
.ticks,
.box {
  stroke: #222;
}
.line {
  fill: none;
  stroke: #0072bd;
  stroke-width: 1px;
  stroke-linejoin: round;
  vector-effect: non-scaling-stroke;
}
.ylabels {
  text-anchor: end;
}
.xlabels {
  text-anchor: middle;
}
```
